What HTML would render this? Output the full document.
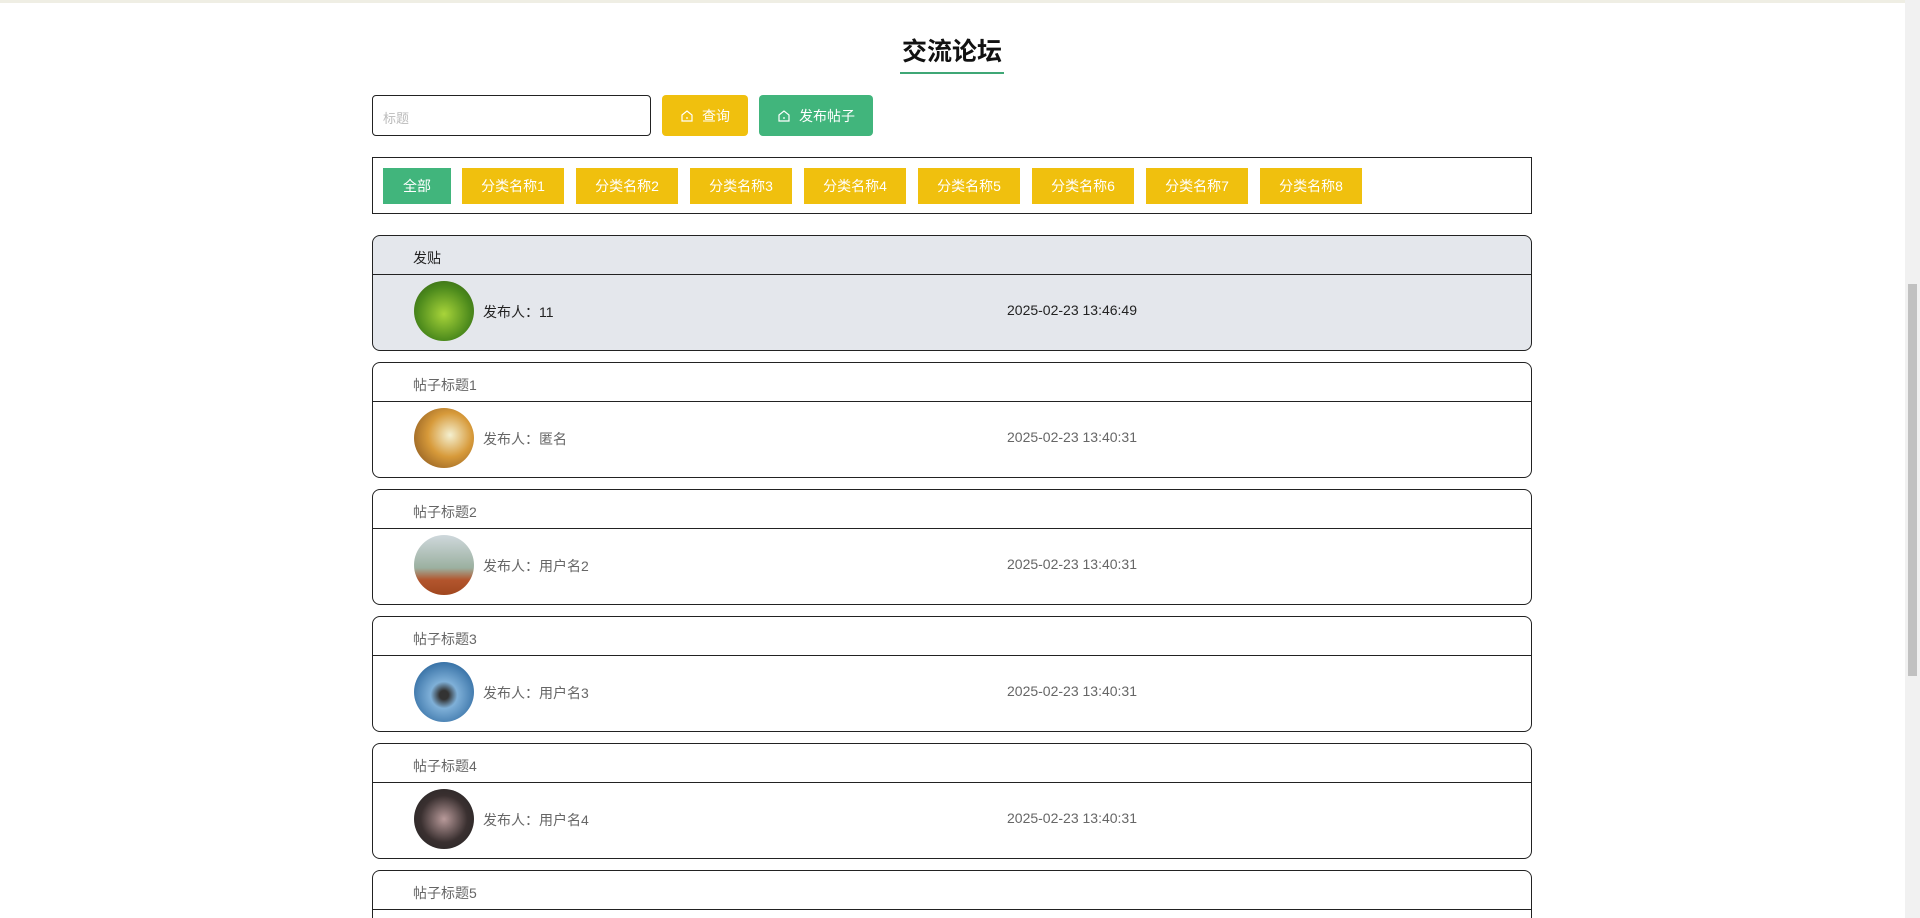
<!DOCTYPE html>
<html><head><meta charset="utf-8"><style>
*{box-sizing:border-box;margin:0;padding:0}
html{width:1920px;height:918px;overflow:hidden}
body{width:1920px;height:918px;overflow:hidden;background:#fff;font-family:"Liberation Sans","Noto Sans CJK SC",sans-serif;position:relative}
.top{position:absolute;left:0;top:0;width:1905px;height:3px;background:#efeee4}
.title{position:absolute;left:900px;top:32px;width:104px;text-align:center;font-size:25px;font-weight:bold;color:#111}
.uline{position:absolute;left:900px;top:72px;width:104px;height:2px;background:#3fa776}
.input{position:absolute;left:372px;top:95px;width:279px;height:41px;border:1px solid #222;border-radius:4px;font-size:13px;color:#bbb;padding:12px 10px}
.btn{position:absolute;top:95px;height:41px;border-radius:4px;color:#fff;font-size:14px;display:flex;align-items:center;justify-content:center;gap:8px}
.cat{position:absolute;left:372px;top:157px;width:1160px;height:57px;border:1px solid #222}
.c{position:absolute;top:10px;height:36px;width:102px;background:#f0c00e;color:#fff;font-size:14px;display:flex;align-items:center;justify-content:center}
.card{position:absolute;left:372px;width:1160px;height:116px;border:1px solid #222;border-radius:8px;color:#666;font-size:14px;overflow:hidden}
.card .h{height:39px;border-bottom:1px solid #222;padding:12px 0 0 40px}
.card .av{position:absolute;left:41px;top:45px;width:60px;height:60px;border-radius:50%}
.card .n{position:absolute;left:110px;top:66px}
.card .d{position:absolute;left:634px;top:66px}
.sb{position:absolute;left:1905px;top:0;width:15px;height:918px;background:#f1f1f1}
.th{position:absolute;left:1908px;top:284px;width:9px;height:392px;background:#c1c1c1}
</style></head><body>
<div class="top"></div>
<div class="title">交流论坛</div><div class="uline"></div>
<div class="input">标题</div>
<div class="btn" style="left:662px;width:86px;background:#f0c00e"><svg width="14" height="14" viewBox="0 0 14 14" fill="none" stroke="#fff" stroke-width="1.2"><path d="M2 6L7 2l5 4v6H2z"/><path d="M6 9h2"/></svg>查询</div>
<div class="btn" style="left:759px;width:114px;background:#41b57c"><svg width="14" height="14" viewBox="0 0 14 14" fill="none" stroke="#fff" stroke-width="1.2"><path d="M2 6L7 2l5 4v6H2z"/><path d="M6 9h2"/></svg>发布帖子</div>
<div class="cat">
<div class="c" style="left:10px;width:68px;background:#41b57c">全部</div>
<div class="c" style="left:89px">分类名称1</div>
<div class="c" style="left:203px">分类名称2</div>
<div class="c" style="left:317px">分类名称3</div>
<div class="c" style="left:431px">分类名称4</div>
<div class="c" style="left:545px">分类名称5</div>
<div class="c" style="left:659px">分类名称6</div>
<div class="c" style="left:773px">分类名称7</div>
<div class="c" style="left:887px">分类名称8</div>
</div>
<div class="card" style="top:235px;background:#e4e7ec;color:#222"><div class="h">发贴</div><div class="av" style="background:radial-gradient(circle at 50% 55%,#a8d43a,#4c8a1c 60%,#2f5a14)"></div><div class="n">发布人：11</div><div class="d">2025-02-23 13:46:49</div></div>
<div class="card" style="top:362px"><div class="h">帖子标题1</div><div class="av" style="background:radial-gradient(circle at 60% 45%,#f4f0d0,#d79a3a 45%,#7a4a1a)"></div><div class="n">发布人：匿名</div><div class="d">2025-02-23 13:40:31</div></div>
<div class="card" style="top:489px"><div class="h">帖子标题2</div><div class="av" style="background:linear-gradient(#cfd8dc,#9bb0a0 55%,#b3552d 75%,#a0471f)"></div><div class="n">发布人：用户名2</div><div class="d">2025-02-23 13:40:31</div></div>
<div class="card" style="top:616px"><div class="h">帖子标题3</div><div class="av" style="background:radial-gradient(circle at 50% 55%,#333 10%,#7fb0d8 30%,#2f6aa0 80%)"></div><div class="n">发布人：用户名3</div><div class="d">2025-02-23 13:40:31</div></div>
<div class="card" style="top:743px"><div class="h">帖子标题4</div><div class="av" style="background:radial-gradient(circle at 50% 50%,#b89a9a,#3a3030 55%,#222)"></div><div class="n">发布人：用户名4</div><div class="d">2025-02-23 13:40:31</div></div>
<div class="card" style="top:870px;height:48px;border-bottom:none;border-radius:8px 8px 0 0"><div class="h">帖子标题5</div></div>
<div class="sb"></div><div class="th"></div>
</body></html>
